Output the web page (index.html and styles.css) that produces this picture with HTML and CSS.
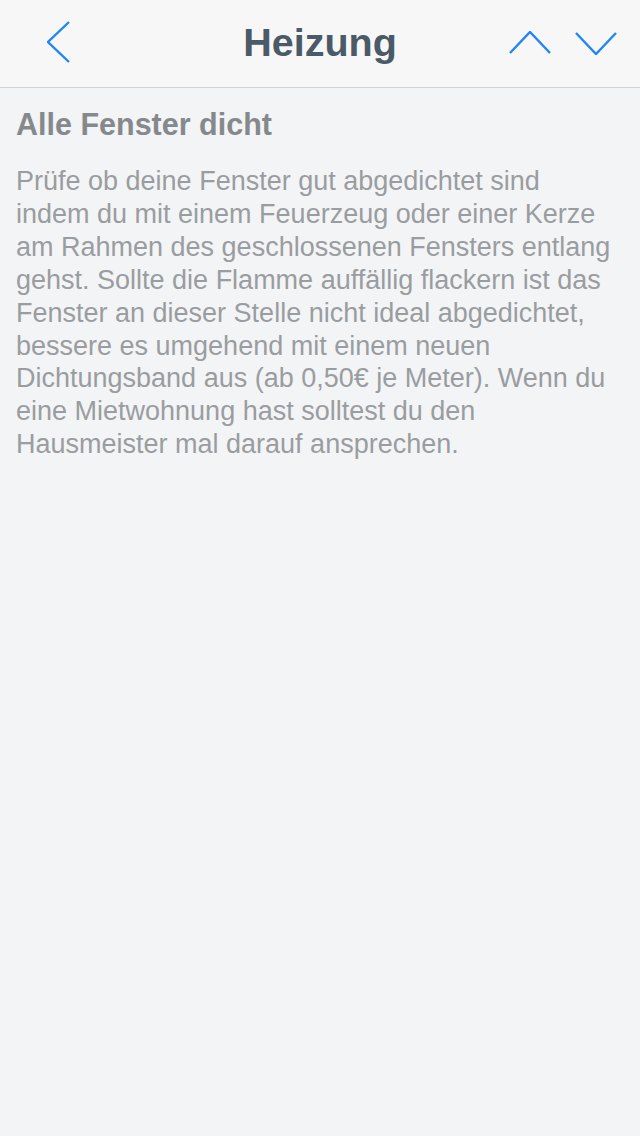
FILE: index.html
```html
<!DOCTYPE html>
<html lang="de">
<head>
<meta charset="utf-8">
<link rel="stylesheet" href="styles.css">
</head>
<body>
<header class="navbar">
  <div class="nav-left">
    <button class="nav-btn back" aria-label="Zurück">
      <svg width="24" height="42" viewBox="0 0 24 42"><polyline points="22,1 1,21 22,41" fill="none" stroke="#1f86f7" stroke-width="2.4"/></svg>
    </button>
  </div>
  <h1 class="title">Heizung</h1>
  <div class="nav-right">
    <button class="nav-btn" aria-label="Vorheriger">
      <svg width="42" height="24" viewBox="0 0 42 24"><polyline points="1,22 21,1 41,22" fill="none" stroke="#1f86f7" stroke-width="2.4"/></svg>
    </button>
    <button class="nav-btn" aria-label="Nächster">
      <svg width="42" height="24" viewBox="0 0 42 24"><polyline points="1,2 21,23 41,2" fill="none" stroke="#1f86f7" stroke-width="2.4"/></svg>
    </button>
  </div>
</header>
<main class="content">
  <h2 class="heading">Alle Fenster dicht</h2>
  <p class="text">Prüfe ob deine Fenster gut abgedichtet sind<br>indem du mit einem Feuerzeug oder einer Kerze<br>am Rahmen des geschlossenen Fensters entlang<br>gehst. Sollte die Flamme auffällig flackern ist das<br>Fenster an dieser Stelle nicht ideal abgedichtet,<br>bessere es umgehend mit einem neuen<br>Dichtungsband aus (ab 0,50€ je Meter). Wenn du<br>eine Mietwohnung hast solltest du den<br>Hausmeister mal darauf ansprechen.</p>
</main>
</body>
</html>
```
FILE: styles.css
```css
html, body {
  margin: 0;
  padding: 0;
  height: 100%;
}
body {
  background: #f3f4f6;
  font-family: "Liberation Sans", Arial, sans-serif;
}
.navbar {
  height: 87px;
  background: #f7f7f8;
  border-bottom: 1px solid #d3d3d5;
  display: grid;
  grid-template-columns: 1fr auto 1fr;
  align-items: center;
  padding: 0 23px;
}
.nav-left {
  display: flex;
  justify-content: flex-start;
  padding-left: 24px;
}
.nav-btn {
  background: none;
  border: 0;
  padding: 0;
  display: flex;
  cursor: pointer;
}
.back {
  margin-top: -3px;
}
.title {
  margin: 0;
  font-size: 39.5px;
  font-weight: bold;
  color: #4a5a67;
  margin-top: -2px;
}
.nav-right {
  display: flex;
  justify-content: flex-end;
  gap: 24px;
  margin-top: -2px;
}
.content {
  padding: 0 16px;
}
.heading {
  margin: 0;
  padding-top: 18px;
  font-size: 30.5px;
  font-weight: bold;
  color: #86898c;
  line-height: 36px;
}
.text {
  margin: 23px 0 0;
  font-size: 27px;
  line-height: 32.9px;
  color: #9a9da0;
  white-space: nowrap;
}
```
